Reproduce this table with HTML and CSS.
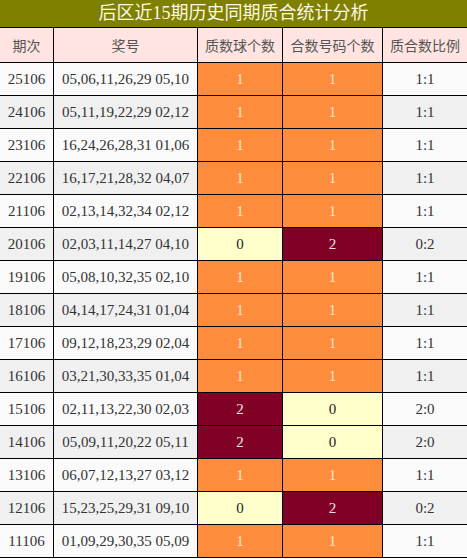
FILE: index.html
```html
<!DOCTYPE html>
<html lang="zh">
<head>
<meta charset="utf-8">
<title>后区近15期历史同期质合统计分析</title>
<link rel="stylesheet" href="styles.css">
</head>
<body>
<div class="title">后区近15期历史同期质合统计分析</div>
<div class="grid">
  <div class="hd">期次</div><div class="hd">奖号</div><div class="hd">质数球个数</div><div class="hd">合数号码个数</div><div class="hd">质合数比例</div>

  <div class="c a">25106</div><div class="c a">05,06,11,26,29 05,10</div><div class="c o">1</div><div class="c o">1</div><div class="c a">1:1</div>
  <div class="c b">24106</div><div class="c b">05,11,19,22,29 02,12</div><div class="c o">1</div><div class="c o">1</div><div class="c b">1:1</div>
  <div class="c a">23106</div><div class="c a">16,24,26,28,31 01,06</div><div class="c o">1</div><div class="c o">1</div><div class="c a">1:1</div>
  <div class="c b">22106</div><div class="c b">16,17,21,28,32 04,07</div><div class="c o">1</div><div class="c o">1</div><div class="c b">1:1</div>
  <div class="c a">21106</div><div class="c a">02,13,14,32,34 02,12</div><div class="c o">1</div><div class="c o">1</div><div class="c a">1:1</div>
  <div class="c b">20106</div><div class="c b">02,03,11,14,27 04,10</div><div class="c y">0</div><div class="c r">2</div><div class="c b">0:2</div>
  <div class="c a">19106</div><div class="c a">05,08,10,32,35 02,10</div><div class="c o">1</div><div class="c o">1</div><div class="c a">1:1</div>
  <div class="c b">18106</div><div class="c b">04,14,17,24,31 01,04</div><div class="c o">1</div><div class="c o">1</div><div class="c b">1:1</div>
  <div class="c a">17106</div><div class="c a">09,12,18,23,29 02,04</div><div class="c o">1</div><div class="c o">1</div><div class="c a">1:1</div>
  <div class="c b">16106</div><div class="c b">03,21,30,33,35 01,04</div><div class="c o">1</div><div class="c o">1</div><div class="c b">1:1</div>
  <div class="c a">15106</div><div class="c a">02,11,13,22,30 02,03</div><div class="c r">2</div><div class="c y">0</div><div class="c a">2:0</div>
  <div class="c b">14106</div><div class="c b">05,09,11,20,22 05,11</div><div class="c r">2</div><div class="c y">0</div><div class="c b">2:0</div>
  <div class="c a">13106</div><div class="c a">06,07,12,13,27 03,12</div><div class="c o">1</div><div class="c o">1</div><div class="c a">1:1</div>
  <div class="c b">12106</div><div class="c b">15,23,25,29,31 09,10</div><div class="c y">0</div><div class="c r">2</div><div class="c b">0:2</div>
  <div class="c a">11106</div><div class="c a">01,09,29,30,35 05,09</div><div class="c o">1</div><div class="c o">1</div><div class="c a">1:1</div>
</div>
</body>
</html>
```

FILE: styles.css
```css
html, body {
  margin: 0;
  padding: 0;
  background: #ffffff;
}
body {
  width: 467px;
  font-family: "Liberation Serif", "Noto Sans CJK SC", serif;
}
.title {
  height: 27px;
  background: #808000;
  color: #fbf8e4;
  font-size: 18px;
  line-height: 27px;
  text-align: center;
  font-family: "Liberation Serif", "Noto Sans CJK SC", serif;
}
.grid {
  display: grid;
  grid-template-columns: 53px 143px 84px 99px 84px;
  grid-template-rows: 34px repeat(15, 32px);
  gap: 1px;
  padding-top: 1px;
  padding-bottom: 1px;
  background: #000000;
}
.hd, .c {
  display: flex;
  align-items: center;
  justify-content: center;
  white-space: nowrap;
}
.hd {
  background: #ffe4e1;
  color: #555555;
  font-size: 14px;
  font-family: "Noto Sans CJK SC", sans-serif;
}
.c {
  font-size: 15px;
  color: #333333;
}
.a { background: #fafafa; }
.b { background: #f0f0f0; }
.o { background: #fd8d3c; color: #fde3cf; }
.y { background: #ffffcc; color: #222222; }
.r { background: #800026; color: #f4e4e8; }
```
